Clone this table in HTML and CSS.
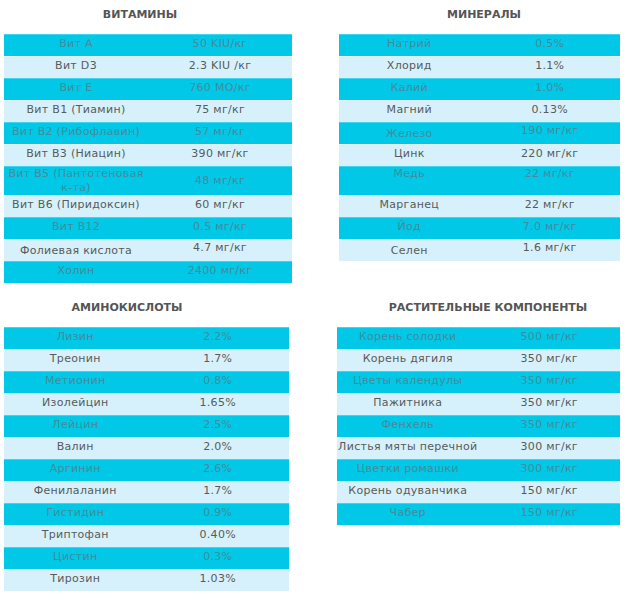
FILE: index.html
```html
<!DOCTYPE html>
<html lang="ru">
<head>
<meta charset="utf-8">
<title>Состав</title>
<link rel="stylesheet" href="styles.css">
</head>
<body>
<div class="page">
  <section class="block block-left">
    <h2 class="title title-vit">ВИТАМИНЫ</h2>
    <table class="tbl tbl-vit">
      <tr class="c"><td>Вит A</td><td>50 KIU/кг</td></tr>
      <tr class="l"><td>Вит D3</td><td>2.3 KIU /кг</td></tr>
      <tr class="c"><td>Вит E</td><td>760 МО/кг</td></tr>
      <tr class="l"><td>Вит B1 (Тиамин)</td><td>75 мг/кг</td></tr>
      <tr class="c"><td>Вит B2 (Рибофлавин)</td><td>57 мг/кг</td></tr>
      <tr class="l"><td>Вит B3 (Ниацин)</td><td>390 мг/кг</td></tr>
      <tr class="c tall"><td>Вит B5 (Пантотеновая<br>к-та)</td><td>48 мг/кг</td></tr>
      <tr class="l"><td>Вит B6 (Пиридоксин)</td><td>60 мг/кг</td></tr>
      <tr class="c"><td>Вит B12</td><td>0.5 мг/кг</td></tr>
      <tr class="l"><td class="low">Фолиевая кислота</td><td class="high">4.7 мг/кг</td></tr>
      <tr class="c"><td>Холин</td><td>2400 мг/кг</td></tr>
    </table>
  </section>
  <section class="block block-right">
    <h2 class="title title-min">МИНЕРАЛЫ</h2>
    <table class="tbl tbl-min">
      <tr class="c"><td>Натрий</td><td>0.5%</td></tr>
      <tr class="l"><td>Хлорид</td><td>1.1%</td></tr>
      <tr class="c"><td>Калий</td><td>1.0%</td></tr>
      <tr class="l"><td>Магний</td><td>0.13%</td></tr>
      <tr class="c"><td class="low">Железо</td><td class="high">190 мг/кг</td></tr>
      <tr class="l"><td>Цинк</td><td>220 мг/кг</td></tr>
      <tr class="c tall top"><td>Медь</td><td>22 мг/кг</td></tr>
      <tr class="l"><td>Марганец</td><td>22 мг/кг</td></tr>
      <tr class="c"><td>Йод</td><td>7.0 мг/кг</td></tr>
      <tr class="l"><td class="low">Селен</td><td class="high">1.6 мг/кг</td></tr>
    </table>
  </section>
  <section class="block block-left second">
    <h2 class="title title-amino">АМИНОКИСЛОТЫ</h2>
    <table class="tbl tbl-amino">
      <tr class="c"><td>Лизин</td><td>2.2%</td></tr>
      <tr class="l"><td>Треонин</td><td>1.7%</td></tr>
      <tr class="c"><td>Метионин</td><td>0.8%</td></tr>
      <tr class="l"><td>Изолейцин</td><td>1.65%</td></tr>
      <tr class="c"><td>Лейцин</td><td>2.5%</td></tr>
      <tr class="l"><td>Валин</td><td>2.0%</td></tr>
      <tr class="c"><td>Аргинин</td><td>2.6%</td></tr>
      <tr class="l"><td>Фенилаланин</td><td>1.7%</td></tr>
      <tr class="c"><td>Гистидин</td><td>0.9%</td></tr>
      <tr class="l"><td>Триптофан</td><td>0.40%</td></tr>
      <tr class="c"><td>Цистин</td><td>0.3%</td></tr>
      <tr class="l"><td>Тирозин</td><td>1.03%</td></tr>
    </table>
  </section>
  <section class="block block-right second">
    <h2 class="title title-plant">РАСТИТЕЛЬНЫЕ КОМПОНЕНТЫ</h2>
    <table class="tbl tbl-plant">
      <tr class="c"><td>Корень солодки</td><td>500 мг/кг</td></tr>
      <tr class="l"><td>Корень дягиля</td><td>350 мг/кг</td></tr>
      <tr class="c"><td>Цветы календулы</td><td>350 мг/кг</td></tr>
      <tr class="l"><td>Пажитника</td><td>350 мг/кг</td></tr>
      <tr class="c"><td>Фенхель</td><td>350 мг/кг</td></tr>
      <tr class="l"><td>Листья мяты перечной</td><td>300 мг/кг</td></tr>
      <tr class="c"><td>Цветки ромашки</td><td>300 мг/кг</td></tr>
      <tr class="l"><td>Корень одуванчика</td><td>150 мг/кг</td></tr>
      <tr class="c"><td>Чабер</td><td>150 мг/кг</td></tr>
    </table>
  </section>
</div>
</body>
</html>
```
FILE: styles.css
```css
html, body {
  margin: 0;
  padding: 0;
  background: #ffffff;
}

body {
  font-family: "DejaVu Sans", Verdana, sans-serif;
  font-size: 11px;
  color: #5a5a5a;
}

.page {
  display: grid;
  grid-template-columns: 288px 283px;
  column-gap: 45px;
  padding-left: 4px;
  align-items: start;
}

.block.second {
  margin-top: 10px;
}

.title {
  margin: 0;
  height: 34px;
  box-sizing: border-box;
  padding-top: 8px;
  font-size: 11px;
  line-height: 13px;
  font-weight: bold;
  color: #555555;
  text-align: center;
  white-space: nowrap;
}

.title-vit { padding-right: 16px; }
.title-amino { padding-right: 42px; }
.title-min { padding-left: 11px; }
.title-plant { padding-left: 19px; }

.tbl {
  border-collapse: collapse;
  table-layout: fixed;
}

.tbl-vit { width: 288px; }
.tbl-amino { width: 285px; }
.tbl-min { width: 281px; margin-left: 2px; }
.tbl-plant { width: 283px; }

.tbl tr {
  height: 22px;
}

.tbl td {
  width: 50%;
  padding: 0 0 3px;
  text-align: center;
  vertical-align: middle;
  line-height: 14px;
  letter-spacing: 0.3px;
  white-space: nowrap;
  box-sizing: border-box;
}

.tbl tr.c td {
  background: #00c8e6;
  color: #458b9b;
  box-shadow: inset 0 1px 0 #3fd5ee;
}

.tbl tr.l td {
  background: #d6f1fb;
  color: #5a5a5a;
  box-shadow: inset 0 1px 0 #e6f7fd;
}

.tbl tr.tall {
  height: 29px;
}

.tbl tr.tall td {
  padding: 0;
}

.tbl tr.top td {
  vertical-align: top;
  padding-top: 1px;
}

.tbl td.low {
  padding: 2px 0 1px;
}

.tbl td.high {
  padding: 0 0 4px;
}
```
